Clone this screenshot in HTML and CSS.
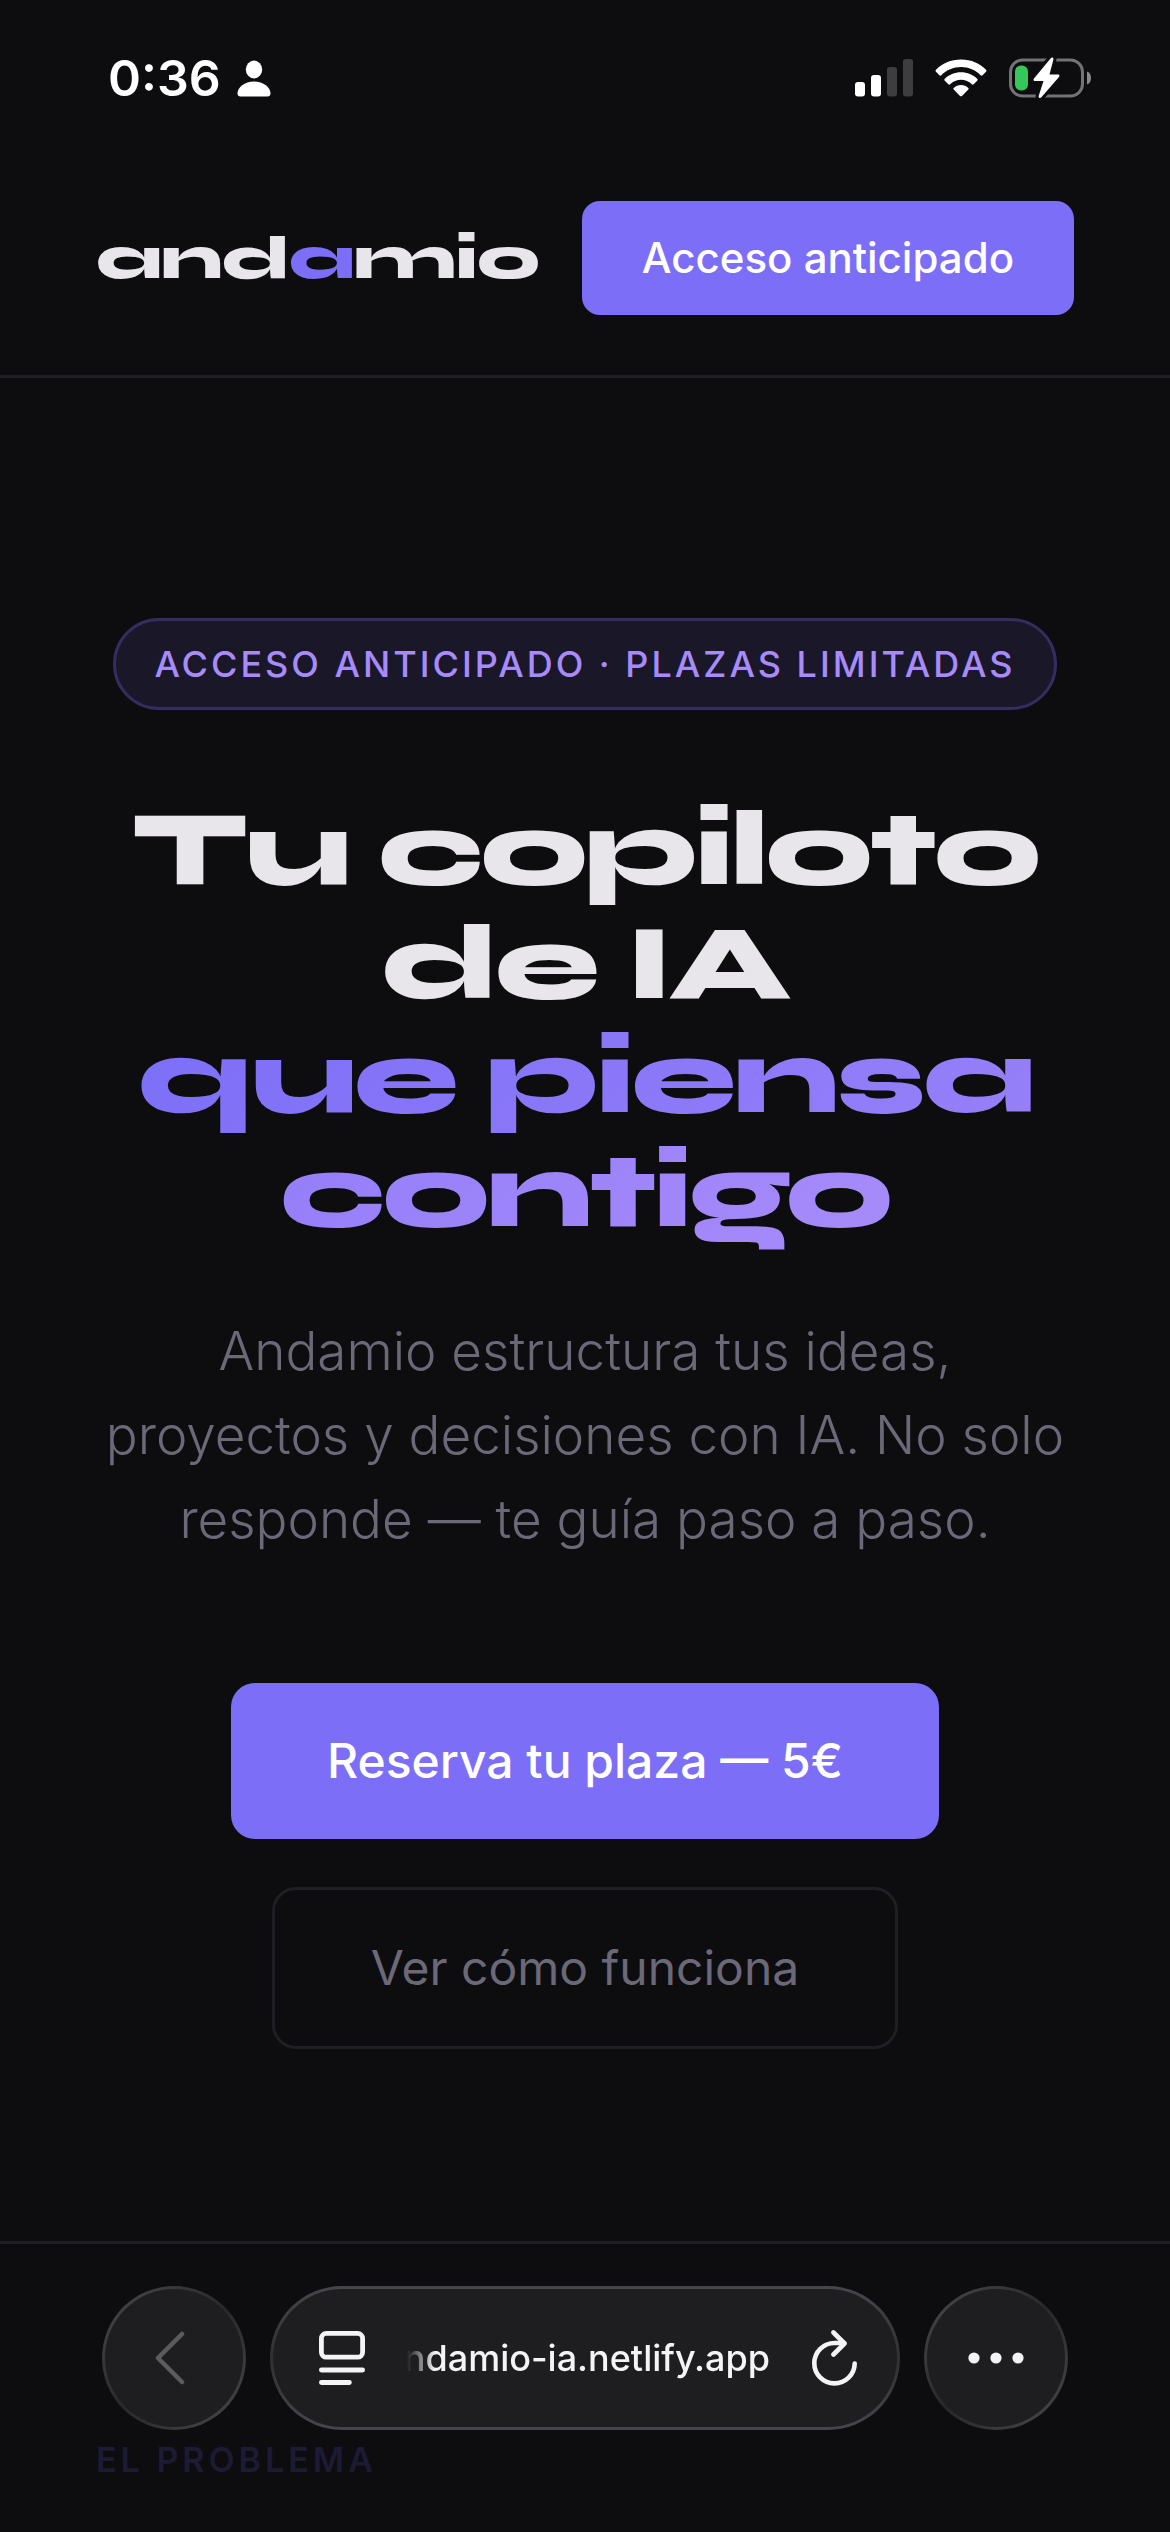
FILE: index.html
```html
<!DOCTYPE html>
<html lang="es">
<head>
  <meta charset="UTF-8" />
  <meta name="viewport" content="width=device-width, initial-scale=1.0"/>
  <title>Andamio</title>
  <link rel="stylesheet" href="styles.css">
</head>
<body>
  <div class="status-bar">
    <div class="status-group">
      <span class="time">0:36</span>
      <svg class="icon" width="34" height="37" viewBox="0 0 34 37" fill="#fff">
        <ellipse cx="17" cy="9.500" rx="8.200" ry="9"/>
        <path d="M17 21.500c9.500 0 16.500 6 16.500 12 0 2-1.200 3-3 3h-27c-1.800 0-3-1-3-3 0-6 7-12 16.500-12z"/>
      </svg>
    </div>
    <div class="status-group status-right">
      <svg class="icon" width="58" height="38" viewBox="0 0 58 38">
        <rect x="0" y="23" width="10" height="14.500" rx="3" fill="#fff"/>
        <rect x="16" y="16" width="10" height="21.500" rx="3" fill="#fff"/>
        <rect x="32" y="8" width="10" height="29.500" rx="3" fill="#3d3d3f"/>
        <rect x="48" y="0" width="10" height="37.500" rx="3" fill="#3d3d3f"/>
      </svg>
      <svg class="icon" width="52" height="38" viewBox="0 0 52 38" fill="#fff">
        <path d="M26 .5C36 .5 45 4.500 51 10.700c.6.600.6 1.500 0 2.100l-3.400 3.400c-.6.600-1.400.6-2 0C40.500 11 33.600 8 26 8S11.500 11 6.400 16.200c-.6.600-1.400.6-2 0L1 12.800c-.6-.6-.6-1.500 0-2.100C7 4.500 16 .5 26 .5z"/>
        <path d="M26 13.200c6.300 0 12 2.500 16.200 6.500.6.600.6 1.400 0 2l-3.500 3.500c-.6.600-1.300.6-1.900 0-2.900-2.700-6.700-4.400-10.800-4.400s-7.900 1.700-10.800 4.400c-.6.600-1.300.6-1.900 0l-3.500-3.500c-.6-.6-.6-1.400 0-2C14 15.700 19.700 13.200 26 13.200z"/>
        <path d="M26 26c2.900 0 5.400 1.100 7.300 2.900.5.500.5 1.200 0 1.700l-6.300 6.300c-.6.600-1.400.6-2 0l-6.300-6.300c-.5-.5-.5-1.200 0-1.700C20.600 27.100 23.100 26 26 26z"/>
      </svg>
      <svg class="icon" width="83" height="42" viewBox="0 0 83 42">
        <rect x="1.500" y="3" width="72" height="36" rx="12" fill="none" stroke="#737375" stroke-width="3"/>
        <path d="M78 14.500c3 1.200 4 3.600 4 6.500s-1 5.300-4 6.500z" fill="#8a8a8c"/>
        <rect x="6" y="8.500" width="13" height="25" rx="6" fill="#34c759"/>
        <path d="M41.500 1.500L25 21.500c-.9 1.200-.4 2.500 1 2.500h8.500l-4.700 14.500c-.7 2.400 1.300 3.200 2.800 1.500L50 20c.9-1.200.4-2.500-1-2.500h-8.500L44.300 3c.7-2.400-1.300-3.200-2.800-1.500z" fill="#fff" stroke="#0d0d0f" stroke-width="6" paint-order="stroke"/>
      </svg>
    </div>
  </div>

  <header class="header">
    <a class="logo" href="#">and<span>a</span>mio</a>
    <a class="btn-small" href="#reserva">Acceso anticipado</a>
  </header>

  <main>
    <section class="hero">
      <div class="badge">Acceso anticipado · Plazas limitadas</div>
      <h1>Tu copiloto de IA<br><span class="gradient">que piensa contigo</span></h1>
      <p>Andamio estructura tus ideas, proyectos y decisiones con IA. No solo responde — te guía paso a paso.</p>
      <div class="actions" id="reserva">
        <a class="btn btn-primary" href="#">Reserva tu plaza — 5€</a>
        <a class="btn btn-ghost" href="#problema">Ver cómo funciona</a>
      </div>
    </section>
    <section class="problem" id="problema">
      <div class="section-label">El problema</div>
    </section>
  </main>

  <nav class="browser-bar">
    <button class="round" aria-label="Atrás">
      <svg width="40" height="54" viewBox="0 0 40 54" fill="none" stroke="#5c5c5f" stroke-width="4.500" stroke-linecap="round" stroke-linejoin="round">
        <path d="M28 3L4 27l24 24"/>
      </svg>
    </button>
    <div class="address">
      <button class="plain" aria-label="Página">
        <svg width="46" height="54" viewBox="0 0 46 54" fill="none" stroke="#f4f4f6" stroke-width="4.800" stroke-linecap="round">
          <rect x="2.400" y="2.400" width="41.200" height="23.800" rx="5"/>
          <path d="M2.400 39h41.200M2.400 51.500h28"/>
        </svg>
      </button>
      <button class="plain url"><span>andamio-ia.netlify.app</span></button>
      <button class="plain" aria-label="Recargar">
        <svg width="46" height="56" viewBox="0 0 46 56" fill="none" stroke="#f4f4f6" stroke-width="4.600" stroke-linecap="round" stroke-linejoin="round">
          <path d="M42.700 33.500A20.200 20.200 0 1 1 22.500 13H32"/>
          <path d="M21.500 2.500L32.500 13.500l-11 11"/>
        </svg>
      </button>
    </div>
    <button class="round" aria-label="Más">
      <svg width="56" height="12" viewBox="0 0 56 12" fill="#f4f4f6">
        <circle cx="6" cy="6" r="5.600"/>
        <circle cx="28" cy="6" r="5.600"/>
        <circle cx="50" cy="6" r="5.600"/>
      </svg>
    </button>
  </nav>
</body>
</html>
```
FILE: styles.css
```css
* {
  box-sizing: border-box;
  margin: 0;
  padding: 0;
}

body {
  font-family: Inter, sans-serif;
  background: #0d0d0f;
  color: #e8e6eb;
  min-height: 100vh;
}

a {
  text-decoration: none;
}

svg {
  display: block;
  flex: none;
}

/* status bar */
.status-bar {
  display: flex;
  justify-content: space-between;
  align-items: center;
  height: 141px;
  padding: 15px 78px 0 108px;
}

.status-group {
  display: flex;
  align-items: center;
  gap: 16px;
}

.status-right {
  gap: 22px;
}

.time {
  font-size: 50px;
  font-weight: 600;
  line-height: 60px;
  color: #fff;
}

/* header */
.header {
  display: flex;
  justify-content: space-between;
  align-items: center;
  padding: 60px 96px;
  border-bottom: 3px solid #1e1e24;
}

.logo {
  font-family: Syne, "DejaVu Sans", sans-serif;
  font-size: 62px;
  font-weight: 800;
  line-height: 74px;
  letter-spacing: -1px;
  color: #e8e6eb;
}

.logo span {
  color: #7c6ef7;
}

.btn-small {
  padding: 30px 60px;
  border-radius: 18px;
  background: #7c6ef7;
  color: #fff;
  font-size: 42px;
  font-weight: 500;
  line-height: 54px;
  white-space: nowrap;
}

/* hero */
.hero {
  display: flex;
  flex-direction: column;
  align-items: center;
  padding: 240px 96px 192px;
  border-bottom: 3px solid #1e1e24;
  text-align: center;
}

.badge {
  padding: 15px 38px;
  border: 3px solid #352d60;
  border-radius: 60px;
  background: #1a1828;
  color: #a78bfa;
  font-size: 36px;
  font-weight: 500;
  line-height: 56px;
  letter-spacing: 3px;
  text-transform: uppercase;
}

h1 {
  margin: 83px 0 60px;
  font-family: Syne, "DejaVu Sans", sans-serif;
  font-size: 106px;
  font-weight: 800;
  line-height: 114px;
  letter-spacing: -3px;
}

.gradient {
  background: linear-gradient(135deg, #7c6ef7, #a78bfa);
  -webkit-background-clip: text;
  background-clip: text;
  color: transparent;
}

.hero p {
  color: #6b6878;
  font-size: 53px;
  font-weight: 300;
  line-height: 84px;
}

.actions {
  display: flex;
  flex-direction: column;
  align-items: center;
  gap: 48px;
  margin-top: 122px;
}

.btn {
  padding: 48px 96px;
  border-radius: 24px;
  font-size: 48px;
  line-height: 60px;
}

.btn-primary {
  background: #7c6ef7;
  color: #fff;
  font-weight: 500;
}

.btn-ghost {
  border: 3px solid #1e1e24;
  color: #6b6878;
}

/* problem */
.problem {
  padding: 192px 96px 24px;
}

.section-label {
  color: #1d1a33;
  font-size: 34px;
  font-weight: 600;
  line-height: 48px;
  letter-spacing: 4px;
  text-transform: uppercase;
}

/* browser controls */
.browser-bar {
  position: fixed;
  left: 0;
  right: 0;
  bottom: 102px;
  display: flex;
  gap: 24px;
  padding: 0 102px;
}

.round,
.address {
  display: flex;
  align-items: center;
  height: 144px;
  border: 3px solid transparent;
  border-radius: 72px;
}

.round {
  flex: none;
  justify-content: center;
  width: 144px;
  background:
    linear-gradient(#1e1e20, #1e1e20) padding-box,
    linear-gradient(135deg, #48484e, #28282b 50%, #48484e) border-box;
}

.address {
  flex: 1;
  min-width: 0;
  padding: 0 39px 0 46px;
  background:
    linear-gradient(#1e1e20, #1e1e20) padding-box,
    linear-gradient(#45454c, #303034 50%, #45454c) border-box;
}

.plain {
  border: none;
  background: none;
}

.url {
  display: flex;
  flex: 1;
  justify-content: flex-end;
  min-width: 0;
  margin: 0 42px;
  overflow: hidden;
  color: #f4f4f6;
  font-family: inherit;
  font-size: 36px;
  font-weight: 500;
  line-height: 48px;
  white-space: nowrap;
  -webkit-mask-image: linear-gradient(90deg, transparent, #000 28px);
  mask-image: linear-gradient(90deg, transparent, #000 28px);
}
```
